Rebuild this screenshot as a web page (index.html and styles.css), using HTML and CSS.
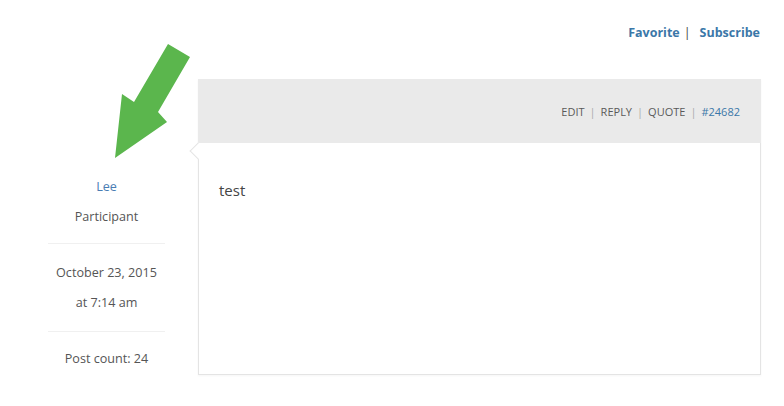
FILE: index.html
```html
<!DOCTYPE html>
<html>
<head>
<meta charset="utf-8">
<link rel="stylesheet" href="styles.css">
</head>
<body>
<div class="page">
  <div class="topbar">
    <a class="toplink">Favorite</a>
    <span class="sep">|</span>
    <a class="toplink">Subscribe</a>
  </div>
  <div class="reply">
    <div class="author">
      <div class="author-block">
        <div class="name">Lee</div>
        <div class="role">Participant</div>
      </div>
      <div class="date-block">
        <div>October 23, 2015</div>
        <div>at 7:14 am</div>
      </div>
      <div class="count-block">Post count: 24</div>
    </div>
    <div class="post">
      <div class="post-header">
        <span class="action">EDIT</span><span class="bar">|</span><span class="action">REPLY</span><span class="bar">|</span><span class="action">QUOTE</span><span class="bar">|</span><span class="permalink">#24682</span>
      </div>
      <div class="post-body">
        <p class="content">test</p>
      </div>
    </div>
  </div>
  <svg class="arrow" width="80" height="120" viewBox="110 40 80 120">
    <polygon points="168,44 190,57 158,112 167,122 115,158 122,94 134,102" fill="#5bb64d"/>
  </svg>
</div>
</body>
</html>
```
FILE: styles.css
```css
html, body {
  margin: 0;
  padding: 0;
  background: #ffffff;
}
body {
  font-family: "Open Sans", "Liberation Sans", sans-serif;
  color: #555;
}
.page {
  position: relative;
  width: 784px;
  height: 406px;
  overflow: hidden;
}
.topbar {
  box-sizing: border-box;
  height: 79px;
  padding: 24px 24px 0 0;
  display: flex;
  justify-content: flex-end;
  align-items: flex-start;
  font-size: 12.5px;
  line-height: 18px;
  font-weight: 700;
  color: #3b77a8;
}
.toplink {
  color: #3b77a8;
}
.sep {
  margin: 0 9px 0 4px;
  font-weight: 400;
  color: #444;
}
.reply {
  display: flex;
  align-items: flex-start;
  padding-left: 48px;
}
.author {
  width: 117px;
  margin-right: 33px;
  padding-top: 92px;
  text-align: center;
  font-size: 12.6px;
  line-height: 30px;
  color: #555;
}
.author-block {
  padding-bottom: 11px;
  border-bottom: 1px solid #f0f0f0;
}
.name {
  line-height: 31px;
  color: #4a7db3;
}
.date-block {
  padding: 14px 0 13px;
  border-bottom: 1px solid #f0f0f0;
}
.count-block {
  padding-top: 12px;
}
.post {
  width: 563px;
  box-sizing: border-box;
  border: 1px solid #e4e4e4;
  box-shadow: 0 1px 2px rgba(0,0,0,0.04);
}
.post-header {
  box-sizing: border-box;
  height: 64px;
  background: #eaeaea;
  display: flex;
  justify-content: flex-end;
  align-items: center;
  padding: 0 21px 0 0;
  font-size: 11px;
  color: #5a5a5a;
  margin: -1px -1px 0 -1px;
}
.bar {
  margin: 0 5px;
  color: #aaa;
}
.permalink {
  color: #3b77a8;
}
.post-body {
  position: relative;
  height: 231px;
  box-sizing: border-box;
  padding: 36px 20px 0;
}
.post-body::before {
  content: "";
  position: absolute;
  left: -7px;
  top: 2px;
  width: 11px;
  height: 11px;
  background: #fff;
  border-left: 1px solid #e4e4e4;
  border-bottom: 1px solid #e4e4e4;
  transform: rotate(45deg);
}
.content {
  margin: 0;
  font-size: 15px;
  line-height: 22px;
  color: #444;
}
.arrow {
  position: absolute;
  left: 110px;
  top: 40px;
}
```
